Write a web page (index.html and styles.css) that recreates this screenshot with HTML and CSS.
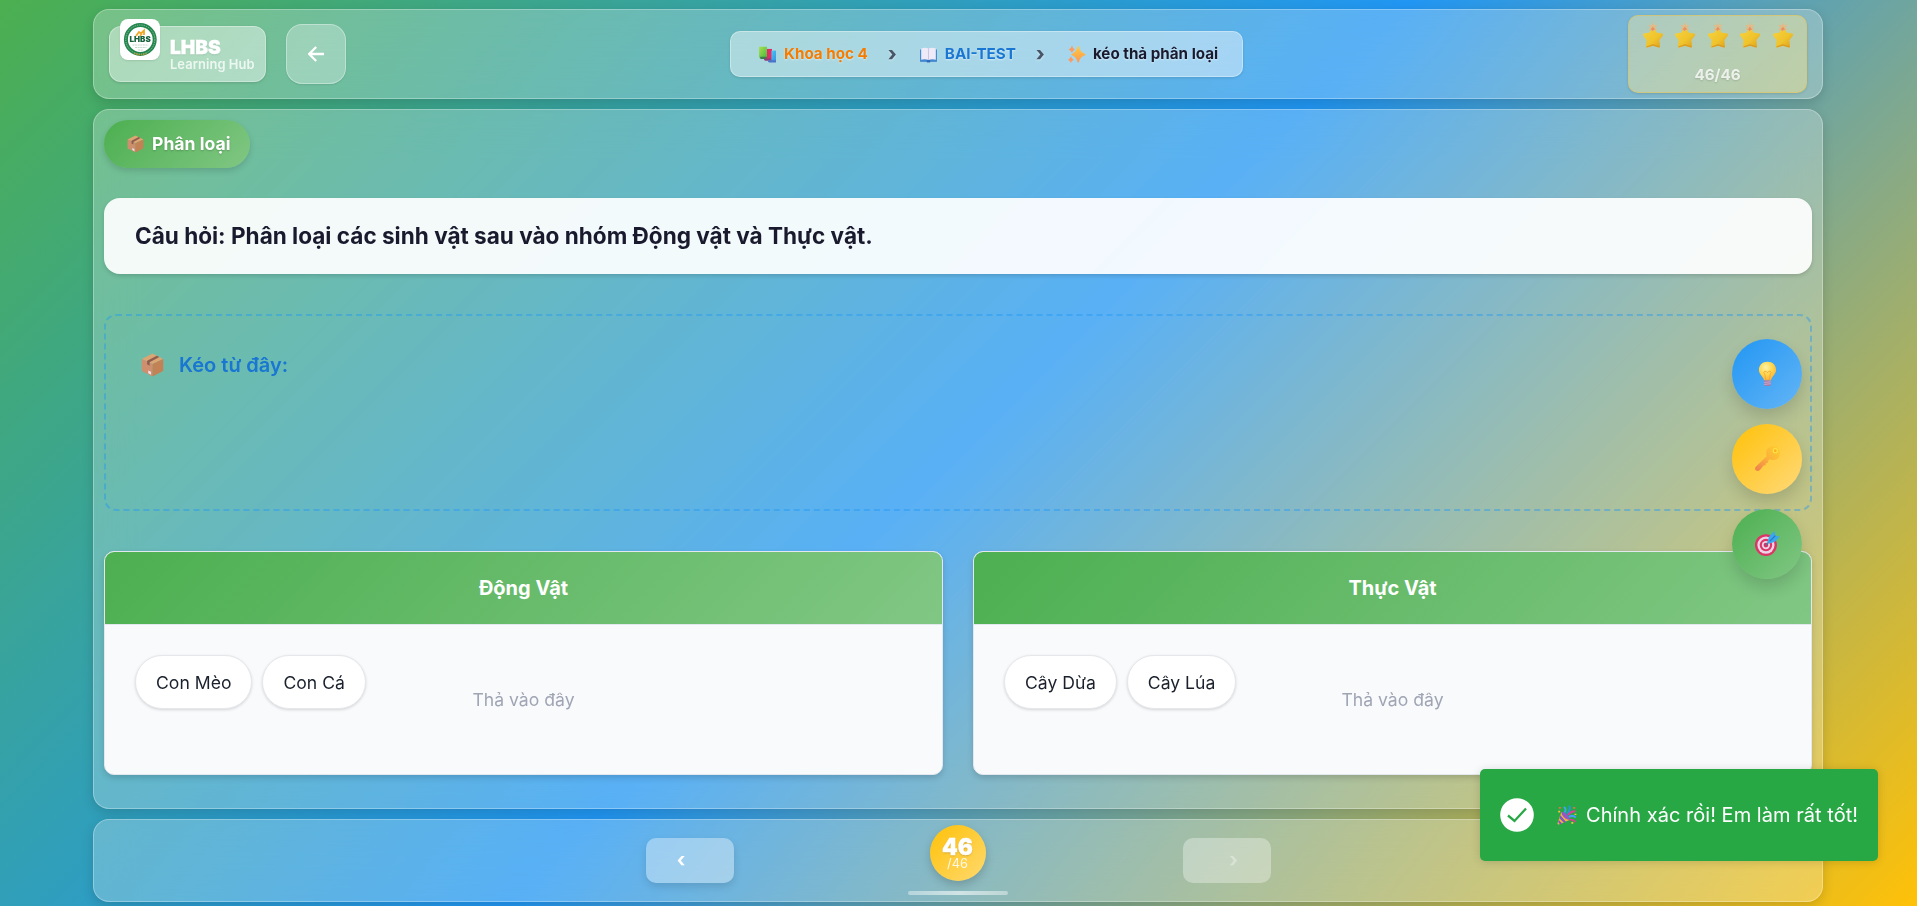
FILE: index.html
```html
<!DOCTYPE html>
<html lang="vi">
<head>
<meta charset="utf-8">
<title>LHBS Learning Hub</title>
<link rel="stylesheet" href="styles.css">
</head>
<body>
<svg class="defs" aria-hidden="true">
  <defs>
    <linearGradient id="g-star" x1="0" y1="0" x2="1" y2="1"><stop offset="0" stop-color="#f6d23c"/><stop offset=".6" stop-color="#efc32c"/><stop offset="1" stop-color="#dfa01f"/></linearGradient>
    <linearGradient id="g-key" x1="1" y1="0" x2="0" y2="1"><stop offset="0" stop-color="#ffd02c"/><stop offset=".5" stop-color="#fbb03c"/><stop offset="1" stop-color="#ee7d4e"/></linearGradient>
    <radialGradient id="g-bulb" cx=".4" cy=".3" r=".8"><stop offset="0" stop-color="#fff3a8"/><stop offset=".5" stop-color="#ffd549"/><stop offset="1" stop-color="#f7a33c"/></radialGradient>
    <linearGradient id="g-spark" x1="0" y1="0" x2="0" y2="1"><stop offset="0" stop-color="#ffc93d"/><stop offset="1" stop-color="#fb9a55"/></linearGradient>
    <linearGradient id="g-green" x1="0" y1="0" x2="1" y2="1"><stop offset="0" stop-color="#a8e04e"/><stop offset="1" stop-color="#45b83f"/></linearGradient>
    <linearGradient id="g-blue" x1="0" y1="0" x2="1" y2="1"><stop offset="0" stop-color="#4fc8f8"/><stop offset="1" stop-color="#2f8fe0"/></linearGradient>
    <symbol id="box" viewBox="0 0 32 32">
      <path d="M16 0 31 7.500 16 14.500 1 7.500Z" fill="#dba673"/>
      <path d="M1 7.500 16 14.500V32L2.500 25Q1 24.300 1 22.500Z" fill="#cd8f6d"/>
      <path d="M31 7.500 16 14.500V32L29.500 25Q31 24.300 31 22.500Z" fill="#c28256"/>
      <path d="M22 3 25.500 4.800 12 12V17L8.500 15V10Z" fill="#8f5d4f"/>
      <path d="M10 23.500 14 25.500V29.500L10 27.500Z" fill="#f0dcec"/>
    </symbol>
    <symbol id="star" viewBox="0 0 20 26">
      <path d="M10 6.500 13 11.800 19 12.800 15.200 17.700 15.800 24.400 10 22.600 4.200 24.400 4.800 17.700 1 12.800 7 11.800Z" fill="url(#g-star)" stroke="url(#g-star)" stroke-width="2.400" stroke-linejoin="round"/>
      <path d="M16 24.800 10 23 4 24.800" fill="none" stroke="#d99a22" stroke-width="1.200" stroke-linecap="round"/>
      <path d="M10 0 11.200 2.900 14.500 2.500 12.600 5 14.300 8 11.300 7.200 10 10 8.500 7.200 5.500 8.200 7.200 5.300 5.400 2.900 8.700 3Z" fill="#e6b884" opacity=".85"/>
      <path d="M10 4.500 11 6.300 12.500 7.500 10.300 7.900 9 9.300 8.500 7.500 7 7.500 8.800 6.200Z" fill="#e98f60"/>
    </symbol>
    <symbol id="books" viewBox="0 0 32 32">
      <path d="M1 3H15V24H4Q1 24 1 21Z" fill="url(#g-green)"/>
      <path d="M3 21H17V25H5Q3 25 3 23Z" fill="#3d7d50"/>
      <path d="M15 7H24V26H15Z" fill="#e22c63"/>
      <path d="M10 24H24V28H12Q9 27 10 24Z" fill="#933a78"/>
      <path d="M23 10H31V29H23Z" fill="url(#g-blue)"/>
      <path d="M17 27H31V31H19Q16 30 17 27Z" fill="#4a72c8"/>
    </symbol>
    <symbol id="book" viewBox="0 0 32 32">
      <path d="M1 8H31V30H1Z" fill="#4387cf"/>
      <path d="M3 6Q10 4 16 6Q22 4 29 6V26Q22 24.500 16 26.500Q10 24.500 3 26Z" fill="#efeaf8"/>
      <path d="M16 6V26.500" stroke="#c6bfdc" stroke-width="1.500"/>
      <path d="M13 27H19V31H13Z" fill="#2d68b8"/>
    </symbol>
    <symbol id="sparkles" viewBox="0 0 32 32">
      <path d="M19 3Q21 14 31 17Q21 20 19 30Q17 20 8 17Q17 14 19 3Z" fill="url(#g-spark)" stroke="url(#g-spark)" stroke-width="2.500" stroke-linejoin="round"/>
      <path d="M8 1Q9 6 13 8Q9 10 8 14Q7 10 2 8Q7 6 8 1ZM6 20Q7 24 11 26Q7 28 6 32Q5 28 1 26Q5 24 6 20Z" fill="#fb9a62"/>
    </symbol>
    <symbol id="bulb" viewBox="0 0 24 32">
      <path d="M12 1C5.500 1 1 5.500 1 11.300C1 16 4.500 18.600 6.200 21.500Q7.200 23 7.500 25H16.500Q16.800 23 17.800 21.500C19.500 18.600 23 16 23 11.300C23 5.500 18.500 1 12 1Z" fill="url(#g-bulb)"/>
      <path d="M10 25 8.500 17Q6 14 8.500 13Q11 13 12 15Q13 13 15.500 13Q18 14 15.500 17L14 25" fill="none" stroke="#f3a737" stroke-width="1.100"/>
      <path d="M7.800 25H16.200V30.500Q15 33 12 33Q9 33 7.800 30.500Z" fill="#a27bab"/>
      <path d="M7.800 27.500 16.200 26.500M7.800 30 16.200 29" stroke="#d8b4cf" stroke-width="1"/>
    </symbol>
    <symbol id="key" viewBox="0 0 32 32">
      <path d="M23 0Q32 0 32 9Q32 18 23 18Q20 18 18.500 17L17 19 16.500 21.500 14 22 13.500 24.500 11 25 6 31Q3.500 33 1 31Q-1 29 1 26.500L15 13Q12 2 23 0Z" fill="url(#g-key)"/>
      <circle cx="26" cy="6" r="2.600" fill="#fbb417" stroke="#ffe04d" stroke-width="1.500"/>
    </symbol>
    <symbol id="target" viewBox="0 0 32 32">
      <circle cx="14" cy="18" r="14" fill="#dd3566"/>
      <circle cx="14" cy="18" r="11" fill="#ecd5e8"/>
      <circle cx="14" cy="18" r="8" fill="#dd3566"/>
      <circle cx="14" cy="18" r="5.300" fill="#ecd5e8"/>
      <circle cx="14" cy="18" r="3" fill="#d03365"/>
      <path d="M14 18 22 10" stroke="#52799c" stroke-width="2"/>
      <path d="M16 14 18 7 25 0 26 6 32 7 25 14 18 16Z" fill="#3ba7ef"/>
      <path d="M19 13 26 6" stroke="#2475c4" stroke-width="1.500"/>
    </symbol>
    <symbol id="party" viewBox="0 0 32 32">
      <path d="M7 11 20 24 3 31Q1 31.500 1 29Z" fill="#f6b13c"/>
      <path d="M5.500 16.500 14.500 27 11 28.500 4 21ZM3 24 8 29.500 5 31 2 27Z" fill="#7c55c8"/>
      <path d="M7 11Q11 10 16 15Q21 20 20 24Q15 24 11 19.500Q7 15 7 11Z" fill="#9654c6"/>
      <path d="M12 12Q16 7 11 3" fill="none" stroke="#3fa7ef" stroke-width="3"/>
      <path d="M16 14Q22 10 20 1" fill="none" stroke="#2398d6" stroke-width="3.500"/>
      <path d="M18 16Q22 10 29 10" fill="none" stroke="#e9379a" stroke-width="3.500"/>
      <path d="M19 19Q25 15 30 20" fill="none" stroke="#42a0f5" stroke-width="3.500"/>
      <path d="M20 24Q25 22 29 27" fill="none" stroke="#e9379a" stroke-width="3"/>
      <path d="M3 3H6V6H3ZM26 3H29V6H26Z" fill="#f46f45"/><path d="M2 9H5V12H2ZM23 27H26V30H23ZM28 14H31V16H28Z" fill="#f9c23c"/>
    </symbol>
  </defs>
</svg>
<div class="page">
  <header class="panel topbar">
    <div class="topbar-left">
      <div class="brand">
        <div class="brand-logo">
          <svg viewBox="0 0 40 41">
            <circle cx="20.300" cy="20.500" r="14.400" fill="#fff" stroke="#22864d" stroke-width="4"/>
            <circle cx="20.300" cy="20.500" r="14.500" fill="none" stroke="#8fc09a" stroke-width="1" stroke-dasharray="1.300 1"/>
            <path d="M14 34.200Q20.500 37.200 27 34.200" fill="none" stroke="#b09a32" stroke-width="1.500" stroke-dasharray="1.500 .8"/>
            <path d="M16 17 19 13 21 14.500 24 11.500V16M20 17 22 14.500" fill="none" stroke="#efaa2c" stroke-width="1.800"/>
            <text x="20.200" y="23.300" text-anchor="middle" class="logo-text">LHBS</text>
            <path d="M12.500 26H28.500M15 28.500H26.500M18 31H23" stroke="#b5cfbd" stroke-width=".8" stroke-dasharray="2 .6"/>
          </svg>
        </div>
        <div class="brand-text"><b>LHBS</b><span>Learning Hub</span></div>
      </div>
      <button class="back"><svg viewBox="0 0 16 16"><path d="M16 8H1.500M8.200 1 1.200 8 8.200 15" fill="none" stroke="#fff" stroke-width="2.300"/></svg></button>
    </div>
    <nav class="crumbs">
      <span class="crumb crumb-subject"><svg><use href="#books"/></svg>Khoa học 4</span>
      <span class="sep">›</span>
      <span class="crumb crumb-lesson"><svg><use href="#book"/></svg>BAI-TEST</span>
      <span class="sep">›</span>
      <span class="crumb"><svg><use href="#sparkles"/></svg>kéo thả phân loại</span>
    </nav>
    <div class="score">
      <div class="stars"><svg><use href="#star"/></svg><svg><use href="#star"/></svg><svg><use href="#star"/></svg><svg><use href="#star"/></svg><svg><use href="#star"/></svg></div>
      <span>46/46</span>
    </div>
  </header>

  <main class="panel content">
    <div class="kind"><svg><use href="#box"/></svg>Phân loại</div>
    <h1 class="question">Câu hỏi: Phân loại các sinh vật sau vào nhóm Động vật và Thực vật.</h1>
    <section class="source"><h2><svg><use href="#box"/></svg>Kéo từ đây:</h2></section>
    <section class="groups">
      <article class="group">
        <h3>Động Vật</h3>
        <div class="zone">
          <span class="chip">Con Mèo</span><span class="chip">Con Cá</span>
          <span class="hint">Thả vào đây</span>
        </div>
      </article>
      <article class="group">
        <h3>Thực Vật</h3>
        <div class="zone">
          <span class="chip">Cây Dừa</span><span class="chip">Cây Lúa</span>
          <span class="hint">Thả vào đây</span>
        </div>
      </article>
    </section>
  </main>

  <footer class="panel pager">
    <button class="step prev">‹</button>
    <div class="progress">
      <div class="badge"><b>46</b><span>/46</span></div>
      <div class="bar"></div>
    </div>
    <button class="step next">›</button>
  </footer>
</div>

<aside class="tools">
  <button class="tool tool-hint"><svg class="i-bulb"><use href="#bulb"/></svg></button>
  <button class="tool tool-key"><svg><use href="#key"/></svg></button>
  <button class="tool tool-target"><svg><use href="#target"/></svg></button>
</aside>

<div class="toast">
  <svg class="check" viewBox="0 0 34 34"><circle cx="17" cy="17" r="16.800" fill="#fff"/><path d="M8 17.500 14.500 23 26 10.500" fill="none" stroke="#28a745" stroke-width="2.300"/></svg>
  <svg class="party"><use href="#party"/></svg>
  <span>Chính xác rồi! Em làm rất tốt!</span>
</div>
</body>
</html>
```
FILE: styles.css
```css
* { box-sizing: border-box; }
body {
  margin: 0;
  height: 906px;
  overflow: hidden;
  font-family: Inter, "Noto Sans", sans-serif;
  color: #1a1a2e;
  background: linear-gradient(135deg, #4caf50 0%, #2196f3 50%, #ffc107 100%);
}
h1, h2, h3 { margin: 0; }
button { font: inherit; border: 0; padding: 0; }
.defs { position: absolute; width: 0; height: 0; }

.page {
  display: flex;
  flex-direction: column;
  gap: 10px;
  width: 1730px;
  margin: 0 auto 0 93px;
  padding-top: 9px;
}
.panel {
  background: rgba(255, 255, 255, .25);
  border: 1px solid rgba(255, 255, 255, .3);
  border-radius: 16px;
  box-shadow: 0 4px 12px rgba(0, 0, 0, .15);
  backdrop-filter: blur(20px);
}

.topbar {
  display: flex;
  justify-content: space-between;
  align-items: center;
  height: 90px;
  padding: 0 15px;
}
.topbar-left { display: flex; align-items: center; gap: 20px; }
.brand {
  display: flex;
  align-items: flex-start;
  gap: 10px;
  width: 157px;
  height: 56px;
  padding-left: 10px;
  background: linear-gradient(135deg, rgba(255,255,255,.4), rgba(255,255,255,.45));
  border: 1px solid rgba(255, 255, 255, .35);
  border-radius: 12px;
  box-shadow: 0 1px 3px rgba(0, 0, 0, .15);
}
.brand-logo {
  width: 40px;
  height: 41px;
  margin-top: -8px;
  background: #fff;
  border-radius: 8px;
  box-shadow: 0 1px 2px rgba(0, 0, 0, .1);
}
.brand-logo svg { display: block; width: 40px; height: 41px; }
.logo-text { font: 900 8px Inter, sans-serif; fill: #17633c; }
.brand-text { display: flex; flex-direction: column; margin-top: 9px; color: #fff; }
.brand-text b { font-size: 19.200px; line-height: 22px; font-weight: 900; -webkit-text-stroke: .3px #fff; text-shadow: 0 1px 2px rgba(0, 0, 0, .1); }
.brand-text span { font-size: 12.900px; line-height: 14px; font-weight: 600; letter-spacing: .08px; opacity: .78; white-space: nowrap; }
.back {
  display: grid;
  place-items: center;
  width: 60px;
  height: 60px;
  background: rgba(255, 255, 255, .3);
  border: 1px solid rgba(255, 255, 255, .35);
  border-radius: 16px;
  box-shadow: 0 1px 2px rgba(0, 0, 0, .1);
}
.back svg { width: 16px; height: 16px; margin: -1px 1px 0 0; }

.crumbs {
  display: flex;
  align-items: center;
  width: 513px;
  height: 46px;
  margin-right: 1px;
  padding: 0 0 1px 27px;
  background: rgba(255, 255, 255, .45);
  border: 1px solid rgba(255, 255, 255, .35);
  border-radius: 10px;
  box-shadow: 0 1px 3px rgba(0, 0, 0, .12);
  font-size: 15.200px;
  font-weight: 700;
  white-space: nowrap;
  text-shadow: 0 1px 2px rgba(255, 255, 255, .5);
}
.crumb { display: flex; align-items: center; gap: 7px; }
.crumb svg { width: 19px; height: 18px; }
.crumb-subject { color: #f57c00; }
.crumb-lesson { color: #1976d2; }
.sep { width: 51px; padding-right: 2px; text-align: center; font-size: 20px; font-weight: 800; color: #4a5568; line-height: 20px; }

.score {
  display: flex;
  flex-direction: column;
  align-items: center;
  width: 179px;
  height: 78px;
  padding-top: 6px;
  background: linear-gradient(135deg, rgba(255, 235, 160, .4), rgba(255, 235, 140, .42));
  border: 1px solid rgba(240, 190, 60, .45);
  border-radius: 10px;
  box-shadow: 0 1px 3px rgba(0, 0, 0, .12);
}
.stars { display: flex; gap: 12.500px; }
.stars svg { width: 20px; height: 26px; overflow: visible; }
.score span { margin-top: 17px; font-size: 15.200px; line-height: 20px; font-weight: 700; color: rgba(255, 255, 255, .8); text-shadow: 0 1px 2px rgba(0, 0, 0, .15); }

.content { height: 700px; padding: 10px; }
.kind {
  display: flex;
  align-items: center;
  gap: 8px;
  width: 146px;
  height: 48px;
  padding: 0 0 1px 23px;
  border-radius: 24px;
  background: linear-gradient(135deg, #4caf50, #81c784);
  color: #fff;
  font-size: 17.600px;
  font-weight: 700;
  white-space: nowrap;
  text-shadow: 0 1px 2px rgba(0, 0, 0, .2);
  box-shadow: 0 3px 6px rgba(0, 0, 0, .14);
}
.kind svg { width: 17px; height: 18px; }
.question {
  height: 76px;
  margin-top: 30px;
  padding-left: 31px;
  background: rgba(255, 255, 255, .93);
  border-radius: 16px;
  box-shadow: 0 2px 4px rgba(0, 0, 0, .14);
  font-size: 22.550px;
  line-height: 76px;
  font-weight: 700;
}
.source {
  height: 197px;
  margin-top: 40px;
  padding: 35px 35px;
  border: 2px dashed rgba(33, 150, 243, .42);
  border-radius: 12px;
}
.source h2 { display: flex; align-items: center; gap: 15px; font-size: 20px; line-height: 28px; font-weight: 600; color: #1976d2; }
.source svg { width: 23px; height: 24px; }

.groups { display: grid; grid-template-columns: 1fr 1fr; gap: 30px; margin-top: 40px; }
.group {
  height: 224px;
  overflow: hidden;
  background: #f9fafc;
  border: 1px solid #e2e8ee;
  border-radius: 10px;
  box-shadow: 0 3px 6px rgba(0, 0, 0, .15);
}
.group h3 {
  height: 73px;
  border-bottom: 1px solid #e2e8ee;
  background: linear-gradient(135deg, #4caf50, #81c784) padding-box;
  color: #fff;
  font-size: 20px;
  line-height: 72px;
  font-weight: 700;
  text-align: center;
}
.zone { position: relative; display: flex; align-items: flex-start; gap: 10px; height: 149px; padding: 30px; }
.chip {
  height: 54px;
  padding: 0 20px;
  background: #fff;
  border: 1px solid #e5e7eb;
  border-radius: 27px;
  box-shadow: 0 1px 3px rgba(0, 0, 0, .15);
  font-size: 17.600px;
  line-height: 54px;
  color: #1a202c;
}
.hint { position: absolute; inset: 0; line-height: 150px; text-align: center; font-size: 17.600px; color: #a0a5b4; }

.pager { display: flex; justify-content: center; align-items: flex-start; height: 83px; }
.step {
  width: 88px;
  height: 45px;
  margin-top: 18px;
  padding-bottom: 2px;
  border-radius: 10px;
  background: rgba(255, 255, 255, .37);
  color: #fff;
  font-size: 20px;
  font-weight: 700;
}
.prev { padding-right: 17px; box-shadow: 0 4px 8px rgba(0, 0, 0, .12); }
.next { padding-left: 14px; color: rgba(255, 255, 255, .35); background: rgba(255, 255, 255, .33); }
.progress { display: flex; flex-direction: column; align-items: center; gap: 10px; width: 100px; margin: 5px 175px 0 174px; }
.badge {
  display: flex;
  flex-direction: column;
  align-items: center;
  width: 56px;
  height: 56px;
  padding-top: 10px;
  border-radius: 50%;
  background: linear-gradient(135deg, #ffc107, #ffd96f);
  color: #fff;
  box-shadow: 0 4px 10px rgba(0, 0, 0, .18);
}
.badge b { font-size: 22.400px; line-height: 23px; font-weight: 900; -webkit-text-stroke: .3px #fff; text-shadow: 0 1px 2px rgba(0, 0, 0, .2); }
.badge span { font-size: 12.800px; line-height: 12px; opacity: .85; }
.bar { width: 100px; height: 4px; border-radius: 2px; background: linear-gradient(90deg, rgba(255,255,255,.4), rgba(255,255,255,.6), rgba(255,255,255,.4)); }

.tools { position: absolute; left: 1732px; top: 339px; display: flex; flex-direction: column; gap: 15px; }
.tool { display: grid; place-items: center; width: 70px; height: 70px; border-radius: 50%; box-shadow: 0 8px 16px rgba(0, 0, 0, .14); }
.tool svg { width: 25px; height: 25px; margin-bottom: 1px; }
.tool .i-bulb { width: 19px; height: 25px; margin-bottom: 2px; overflow: visible; }
.tool-hint { background: linear-gradient(135deg, #2196f3, #64b5f6); }
.tool-key { background: linear-gradient(135deg, #ffc107, #ffd97a); }
.tool-target { background: linear-gradient(135deg, #4caf50, #81c784); }

.toast {
  position: absolute;
  left: 1480px;
  top: 769px;
  display: flex;
  align-items: center;
  width: 398px;
  height: 92px;
  padding-left: 20px;
  background: #28a745;
  border-radius: 5px;
  color: #fff;
  font-size: 20px;
  white-space: nowrap;
  box-shadow: 0 1px 10px rgba(0, 0, 0, .15);
}
.toast span { letter-spacing: .03px; }
.check { width: 34px; height: 34px; }
.party { width: 20px; height: 20px; margin: 0 9px 0 23px; }
```
